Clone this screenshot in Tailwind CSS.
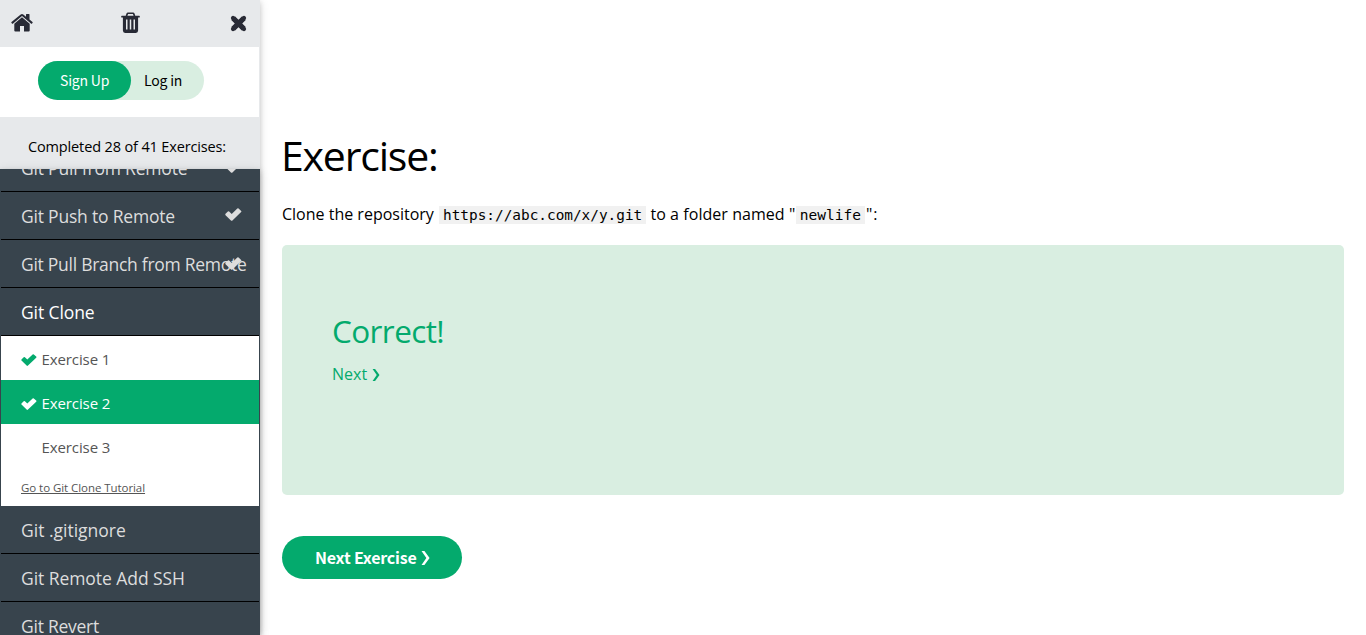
<!DOCTYPE html>
<html lang="en">
<head>
<meta charset="utf-8">
<title>Git Exercises</title>
<script src="https://cdn.jsdelivr.net/npm/@tailwindcss/browser@4"></script>
</head>
<body class="h-[635px] overflow-hidden bg-white font-['Open_Sans',sans-serif] text-black">
<svg class="hidden">
  <symbol id="check" viewBox="0 0 16 12"><path d="M.5 5.4 2.7 3.2 Q3.3 2.7 3.9 3.2L6.3 5.6 11.6.4Q12.2-.1 12.8.4L15.2 2.6Q15.7 3.1 15.2 3.7L7 11.6Q6.3 12.2 5.6 11.6L.5 6.6Q0 6 .5 5.4Z" fill="currentColor"/></symbol>
  <symbol id="chevron" viewBox="0 0 8 13"><path d="M.3 0H3L7.8 6.5 3 13H.3L4.8 6.5Z" fill="currentColor"/></symbol>
</svg>
<div class="flex h-full">
  <aside class="relative z-10 flex h-full w-[260px] shrink-0 flex-col bg-[#e7e9eb] shadow-[0_2px_5px_0_rgba(0,0,0,0.16),0_2px_10px_0_rgba(0,0,0,0.12)]">
    <header class="flex h-[47px] shrink-0 items-start justify-between pl-[11px] pr-[13px] text-[#282a35]">
      <svg class="mt-[13px] h-5 w-[22px]" viewBox="0 0 22 20" fill="currentColor"><path d="M11 4.3 3.3 10.7V17.5Q3.3 18.5 4.3 18.5H9V13H13V18.5H17.7Q18.7 18.5 18.7 17.5V10.7Z"/><path d="M11 .9Q11.7.9 12.3 1.4L15 3.7V1.5Q15 1 15.5 1H18Q18.5 1 18.5 1.5V6.6L21.5 9.1Q21.9 9.4 21.6 9.8L20.9 10.7Q20.6 11 20.2 10.7L11 3 1.8 10.7Q1.4 11 1.1 10.7L.4 9.8Q.1 9.4.5 9.1L9.7 1.4Q10.3.9 11 .9Z"/></svg>
      <svg class="mr-[2px] mt-3 h-[22px] w-[19px]" viewBox="0 0 19 22" fill="currentColor" fill-rule="evenodd"><path d="M6.8.5H12.2Q13 .5 13.4 1.3L14.3 3.7H18.2Q18.8 3.7 18.8 4.3V5Q18.8 5.6 18.2 5.6H17.1V18.6Q17.1 21 14.9 21H4.1Q1.9 21 1.9 18.6V5.6H.8Q.2 5.6.2 5V4.3Q.2 3.7.8 3.7H4.7L5.6 1.3Q6 .5 6.8.5ZM7.1 2 6.4 3.7H12.6L11.9 2ZM5 7.4V17.6H6.5V7.4ZM8.75 7.4V17.6H10.25V7.4ZM12.5 7.4V17.6H14V7.4Z"/></svg>
      <svg class="mt-[15px] h-[17px] w-[17px]" viewBox="0 0 17 17"><path d="M3.1 3.1 13.9 13.9M13.9 3.1 3.1 13.9" stroke="currentColor" stroke-width="5.2" stroke-linecap="butt"/><path d="M3 3 14 14M14 3 3 14" stroke="currentColor" stroke-width="4.2" stroke-linecap="round"/></svg>
    </header>
    <div class="mr-px h-[70px] shrink-0 bg-white pl-[38px] pt-[14px]">
      <div class="flex h-[39px] w-[166px] rounded-full bg-[#d9eee1] font-['Noto_Sans_CJK_SC',sans-serif] text-[14px] leading-[39px] tracking-[-0.2px]">
        <a class="w-[93px] rounded-full bg-[#04aa6d] pl-[22px] text-white">Sign Up</a>
        <a class="pl-[13px]">Log in</a>
      </div>
    </div>
    <div class="h-[52px] shrink-0 pl-7 pt-[18px] text-[14.5px] leading-6 tracking-[-0.14px]">Completed 28 of 41 Exercises:</div>
    <nav class="flex min-h-0 grow flex-col overflow-hidden bg-[#38444d] px-px text-[17.5px] leading-6 whitespace-nowrap text-[#ddd] shadow-[0_2px_5px_0_rgba(0,0,0,0.16),0_2px_10px_0_rgba(0,0,0,0.12)]">
      <div class="-mt-[25px] flex h-12 shrink-0 items-center justify-between border-b border-black pt-px pl-5 pr-[17px]"><span class="tracking-[-0.2px]">Git Pull from Remote</span><svg class="-mt-[3px] h-[13px] w-[17px]"><use href="#check"/></svg></div>
      <div class="flex h-12 shrink-0 items-center justify-between border-b border-black pt-px pl-5 pr-[17px]"><span class="tracking-[-0.2px]">Git Push to Remote</span><svg class="-mt-[3px] h-[13px] w-[17px]"><use href="#check"/></svg></div>
      <div class="relative flex h-12 shrink-0 items-center border-b border-black pt-px pl-5"><span class="tracking-[-0.27px]">Git Pull Branch from Remote</span><svg class="absolute right-[17px] top-[17px] h-[13px] w-[17px]"><use href="#check"/></svg></div>
      <div class="flex h-12 shrink-0 items-center border-b border-black pt-px pl-5 tracking-[-0.1px] text-white">Git Clone</div>
      <div class="h-[170px] shrink-0 bg-white text-[15px] tracking-[-0.1px] text-[#555]">
        <div class="flex h-11 items-center gap-[4.5px] pt-px pl-5"><svg class="mt-0.5 h-3 w-4 text-[#04aa6d]"><use href="#check"/></svg>Exercise 1</div>
        <div class="flex h-11 items-center gap-[4.5px] bg-[#04aa6d] pt-px pl-5 text-white"><svg class="mt-0.5 h-3 w-4"><use href="#check"/></svg>Exercise 2</div>
        <div class="flex h-11 items-center pt-px pl-[40.5px]">Exercise 3</div>
        <a class="block pl-5 pt-[11px] text-[11.5px] leading-[18px] tracking-[-0.06px] underline">Go to Git Clone Tutorial</a>
      </div>
      <div class="flex h-12 shrink-0 items-center border-b border-black pt-px pl-5">Git .gitignore</div>
      <div class="flex h-12 shrink-0 items-center border-b border-black pt-px pl-5 tracking-[-0.06px]">Git Remote Add SSH</div>
      <div class="flex h-12 shrink-0 items-center border-b border-black pt-px pl-5 tracking-[-0.25px]">Git Revert</div>
    </nav>
  </aside>
  <main class="grow px-[22px] pt-[124px]">
    <h1 class="-ml-px h-16 text-[41px] leading-[63px] tracking-[-1.2px]">Exercise:</h1>
    <p class="mt-[14px] flex h-6 items-center whitespace-pre text-[16px] leading-6"><span>Clone the repository </span><code class="ml-px mt-0.5 h-[18px] bg-[#f1f1f1] px-1 font-['DejaVu_Sans_Mono',monospace] text-[14.4px] leading-[18px]">https://abc.com/x/y.git</code><span class="tracking-[0.05px]"> to a folder named "</span><code class="ml-[0.5px] mt-0.5 h-[18px] bg-[#f1f1f1] px-1 font-['DejaVu_Sans_Mono',monospace] text-[14.5px] leading-[18px]">newlife</code><span class="ml-px tracking-[1px]">":</span></p>
    <section class="mt-[19px] h-[250px] rounded-[5px] bg-[#d9eee1] pl-[50px] pt-[62px] text-[#04aa6d]">
      <h2 class="text-[31.5px] leading-[48px] tracking-[-0.6px]">Correct!</h2>
      <a class="mt-[7px] flex items-center gap-[5px] text-[16px] leading-6">Next<svg class="mt-px h-3 w-2"><use href="#chevron"/></svg></a>
    </section>
    <a class="mt-[41px] flex h-[43px] w-[180px] items-center gap-1 rounded-full bg-[#04aa6d] pb-0.5 pl-[33px] font-['Noto_Sans_CJK_SC',sans-serif] text-[16px] font-bold tracking-[-0.2px] whitespace-nowrap text-white">Next Exercise<svg class="mt-0.5 h-[14px] w-[9px]"><use href="#chevron"/></svg></a>
  </main>
</div>
</body>
</html>
